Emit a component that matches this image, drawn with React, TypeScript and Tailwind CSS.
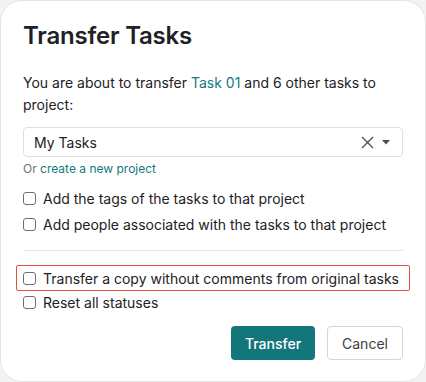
import React from "react";

function Checkbox({label, h = "h-[26px]"}: {label: string, h?: string}) {
    return (
        <label className={`flex items-center gap-[7px] ${h} text-[14px] text-[#1e2125] whitespace-nowrap`}>
            <span className="w-[13px] h-[13px] rounded-[3px] border border-[#6b6f74] bg-white shrink-0"/>
            <span>{label}</span>
        </label>
    )
}

export default function App() {
    return (
        <div className="w-[426px] h-[382px] bg-[#f3f3f3]" style={{fontFamily: "Inter, 'Noto Sans', sans-serif"}}>
            <div className="w-full h-full bg-white rounded-[22px] border border-[#e4e4e4] px-[22px] pt-[20px] flex flex-col">
                <h1 className="text-[24px] font-semibold text-[#1e2125] leading-[30px] tracking-[-0.2px]">Transfer Tasks</h1>

                <p className="mt-[21px] text-[14px] leading-[22px] text-[#1e2125]">
                    You are about to transfer <span className="text-[#137a80]">Task 01</span> and 6 other tasks to project:
                </p>

                {/* project select */}
                <div className="mt-[11px] h-[30px] border border-[#dedfe1] rounded-[4px] flex items-center pl-[10px] pr-[12px]">
                    <span className="flex-1 text-[14px] text-[#1e2125]">My Tasks</span>
                    <svg width="13" height="13" viewBox="0 0 13 13" className="mr-[8px]">
                        <path d="M1 1L12 12M12 1L1 12" stroke="#4a4d52" strokeWidth="1.3"/>
                    </svg>
                    <svg width="8" height="5" viewBox="0 0 8 5">
                        <path d="M0 0H8L4 4.5Z" fill="#4a4d52"/>
                    </svg>
                </div>
                <div className="mt-[2px] text-[12px] leading-[20px] text-[#6d7176]">
                    Or <span className="text-[#137a80]">create a new project</span>
                </div>

                <div className="mt-[6px] flex flex-col">
                    <Checkbox label="Add the tags of the tasks to that project"/>
                    <Checkbox label="Add people associated with the tasks to that project"/>
                </div>

                <div className="mt-[13px] h-px bg-[#e6e7e9]"/>

                <div className="mt-[14px] flex flex-col">
                    <div className="-mx-[7px] px-[6px] border-[1.5px] border-[#e9503c] rounded-[2px]">
                        <Checkbox label="Transfer a copy without comments from original tasks" h="h-[24px]"/>
                    </div>
                    <Checkbox label="Reset all statuses" h="h-[22px]"/>
                </div>

                <div className="mt-[13px] flex justify-end gap-[12px]">
                    <button className="w-[84px] h-[34px] rounded-[4px] bg-[#13767b] text-white text-[14px] font-medium">Transfer</button>
                    <button className="w-[76px] h-[34px] rounded-[4px] bg-white border border-[#d3d5d8] text-[#3b3e42] text-[14px]">Cancel</button>
                </div>
            </div>
        </div>
    )
}
